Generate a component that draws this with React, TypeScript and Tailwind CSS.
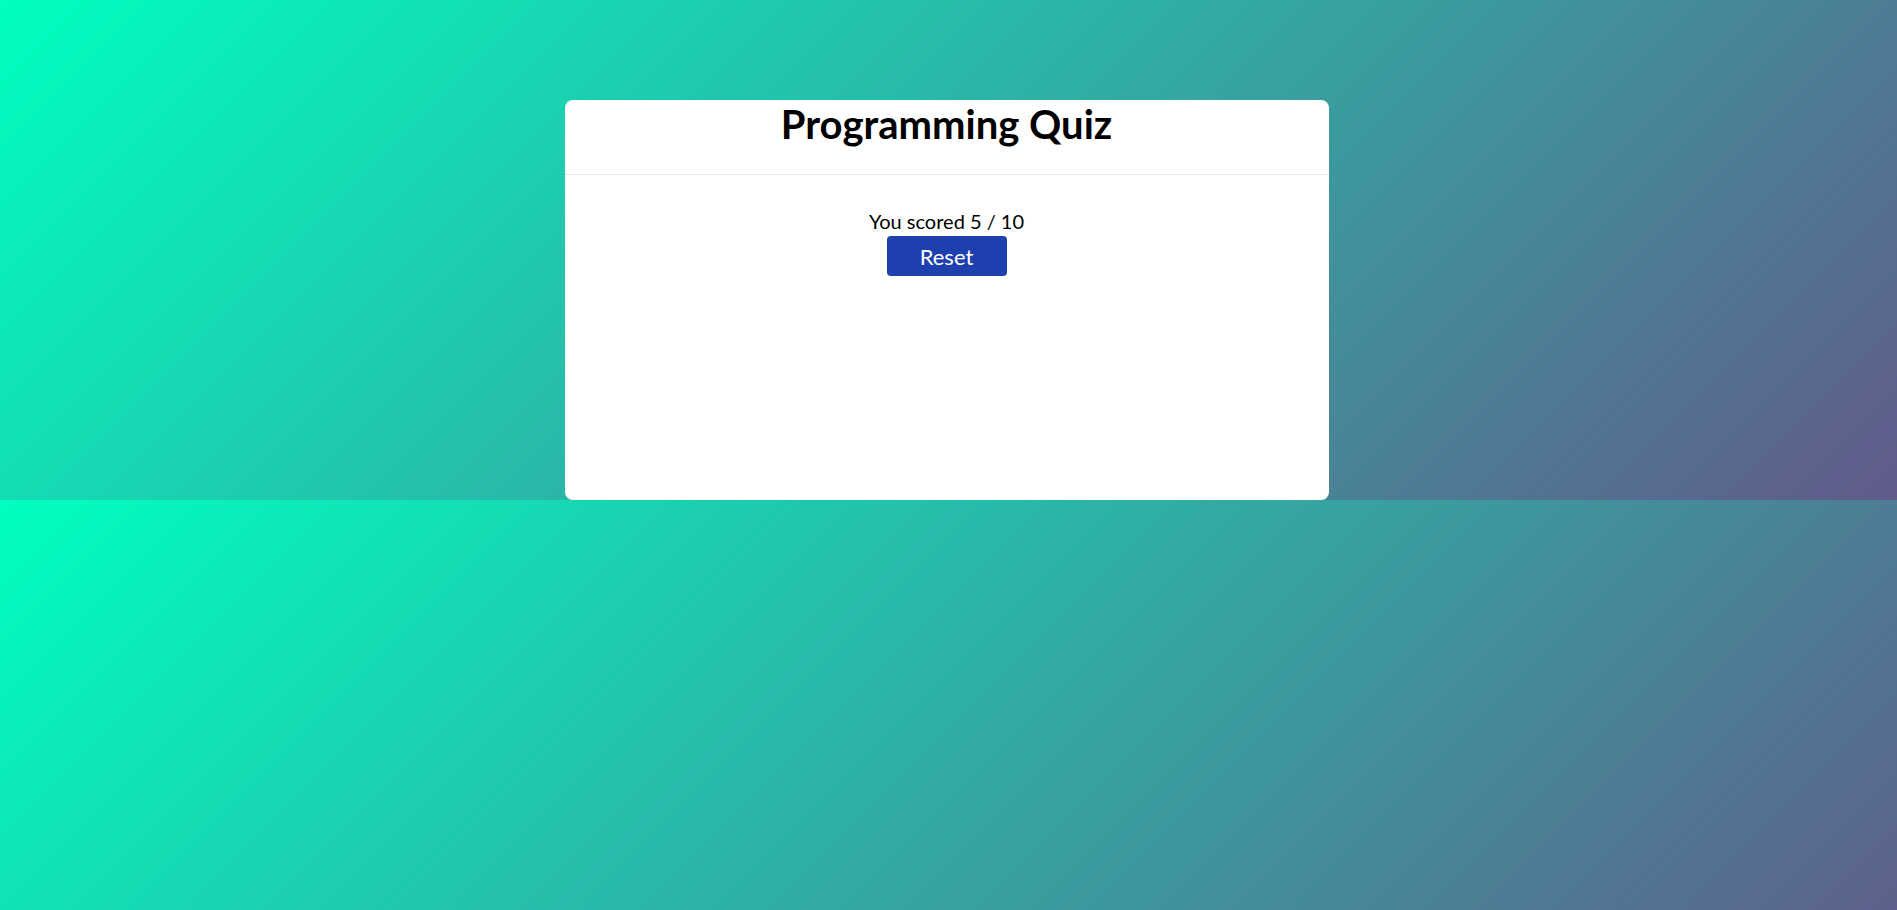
export default function App() {
  return (
    <main className="min-h-screen bg-[linear-gradient(135deg,#00ffbf,#615a8a)] bg-[length:100%_500px] bg-repeat font-['Lato','Liberation_Sans',sans-serif] text-black">
      <div className="pr-1 pt-[100px]">
        {/* Quiz card */}
        <div className="mx-auto flex h-[400px] w-[764px] flex-col rounded-lg bg-white">
          <div className="h-[75px] border-b border-[#e6e6ea]">
            <h1 className="text-center text-[40px] font-bold leading-[48px]">Programming Quiz</h1>
          </div>
          <div className="flex flex-col items-center pt-8">
            <p className="text-[20px] leading-[28px]">You scored 5 / 10</p>
            <button className="mt-px h-10 w-[120px] rounded-[4px] bg-[#1e40af] text-[22px] text-white">
              Reset
            </button>
          </div>
        </div>
      </div>
    </main>
  );
}
